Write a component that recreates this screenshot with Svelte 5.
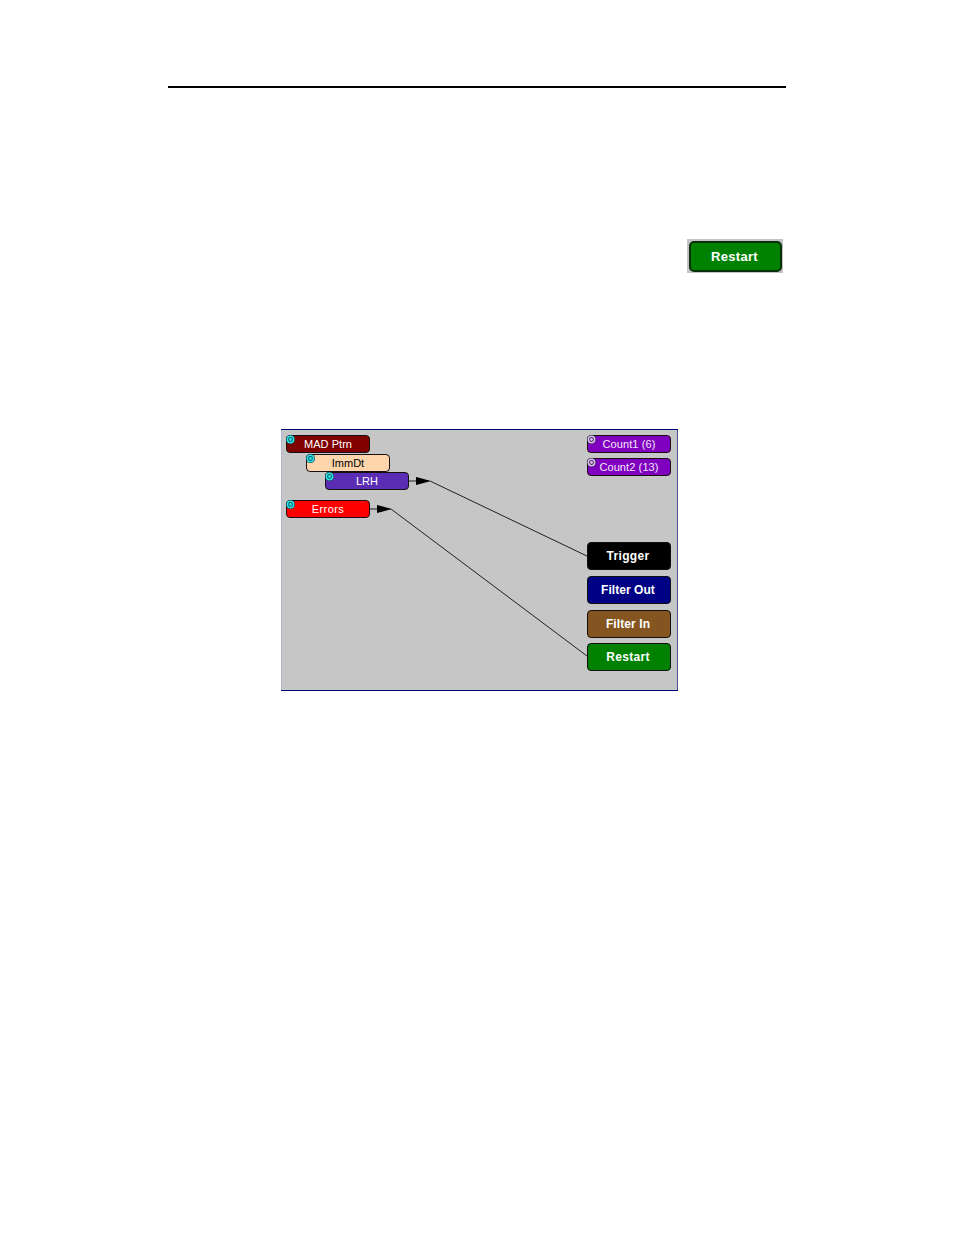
<script lang="ts">
  // node positions are relative to the canvas
  const events = [
    { label: 'MAD Ptrn', x: 5, y: 6, bg: '#800000', fg: '#fff', gap: 0.05 },
    { label: 'ImmDt', x: 25, y: 25, bg: '#ffd5ab', fg: '#000', gap: 0 },
    { label: 'LRH', x: 44, y: 43, bg: '#5a2db4', fg: '#fff', gap: 0 },
    { label: 'Errors', x: 5, y: 71, bg: '#ff0000', fg: '#fff', gap: 0.4 },
  ];

  const counters = [
    { label: 'Count1 (6)', y: 6 },
    { label: 'Count2 (13)', y: 29 },
  ];

  const actions = [
    { label: 'Trigger', y: 113, bg: '#000000', gap: 0.3 },
    { label: 'Filter Out', y: 147, bg: '#000084', gap: 0.05 },
    { label: 'Filter In', y: 181, bg: '#845521', gap: 0.1 },
    { label: 'Restart', y: 214, bg: '#008200', gap: 0.3 },
  ];

  const links = [
    { x: 128, y: 52, tx: 306, ty: 127 },
    { x: 89, y: 80, tx: 306, ty: 227 },
  ];
</script>

{#snippet pin(color: string, center: string)}
  <svg class="pin" viewBox="0 0 9 9">
    <circle cx="4.5" cy="4.5" r="4.5" fill="#083038" />
    <circle cx="4.5" cy="4.5" r="3.2" fill={center} stroke={color} stroke-width="1.5" />
    <circle cx="4.5" cy="4.5" r="1.4" fill={color} />
  </svg>
{/snippet}

<main class="page">
  <hr />

  <div class="sample">
    <button class="action big">Restart</button>
  </div>

  <div class="canvas">
    <svg class="links" viewBox="0 0 397 262">
      {#each links as l}
        <path d="M{l.x} {l.y}H{l.x + 21}L{l.tx} {l.ty}" />
        <polygon points="{l.x + 7},{l.y - 4} {l.x + 11},{l.y - 3} {l.x + 20},{l.y - 0.5} {l.x + 20},{l.y + 0.5} {l.x + 11},{l.y + 3} {l.x + 7},{l.y + 4}" />
      {/each}
    </svg>

    {#each events as e}
      <div class="node" style="left: {e.x}px; top: {e.y}px; background: {e.bg}; color: {e.fg}; letter-spacing: {e.gap}px">
        {@render pin('#30e0e4', '#086068')}
        <span>{e.label}</span>
      </div>
    {/each}

    {#each counters as c}
      <div class="node counter" style="top: {c.y}px">
        {@render pin('#dfc4ee', '#50206c')}
        <span>{c.label}</span>
      </div>
    {/each}

    {#each actions as a}
      <button class="action placed" style="top: {a.y}px; background: {a.bg}; letter-spacing: {a.gap}px">{a.label}</button>
    {/each}
  </div>
</main>

<style>
  :global(body) {
    margin: 0;
    background: #fff;
  }

  .page {
    box-sizing: border-box;
    width: 954px;
    height: 1235px;
    padding: 86px 168px 0;
    display: flex;
    flex-direction: column;
    font-family: "Liberation Sans", Arial, sans-serif;
  }

  hr {
    width: 618px;
    height: 2px;
    margin: 0;
    border: 0;
    background: #000;
  }

  .sample {
    box-sizing: border-box;
    width: 96px;
    height: 34px;
    margin: 151px 3px 0 auto;
    padding: 2px 1px 1px 2px;
    display: flex;
    background: #c3c3c3;
  }

  .canvas {
    position: relative;
    box-sizing: border-box;
    width: 397px;
    height: 262px;
    margin: 156px 0 0 113px;
    background: #c6c6c6;
    box-shadow:
      inset 0 1px #000078,
      inset 0 -1px #000078,
      inset 1px 0 #b4b4d8,
      inset -1px 0 #5050a0;
  }

  .links {
    position: absolute;
    inset: 0;
    width: 397px;
    height: 262px;
  }

  .links path {
    fill: none;
    stroke: #202020;
    stroke-width: 1;
  }

  .links polygon {
    fill: #000;
  }

  .node {
    position: absolute;
    box-sizing: border-box;
    width: 84px;
    height: 18px;
    border: 1px solid #181010;
    border-radius: 4px;
    display: flex;
    align-items: center;
    justify-content: center;
    font-size: 11px;
    line-height: 12px;
    white-space: nowrap;
  }

  .counter {
    left: 306px;
    background: #8000c0;
    color: #f4e8fa;
    letter-spacing: 0.1px;
  }

  .pin {
    position: absolute;
    left: -1px;
    top: -1px;
    width: 9px;
    height: 9px;
  }

  .action {
    box-sizing: border-box;
    width: 84px;
    height: 28px;
    padding: 0 0 1px;
    border: 1px solid #101010;
    border-radius: 4px;
    color: #fff;
    font: bold 12px/1 "Liberation Sans", Arial, sans-serif;
  }

  .placed {
    position: absolute;
    left: 306px;
    padding-right: 2px;
  }

  .big {
    width: 93px;
    height: 31px;
    padding-right: 2px;
    border: 2px solid #083008;
    border-radius: 5px;
    background: #008200;
    font-size: 13px;
    letter-spacing: 0.3px;
  }
</style>
